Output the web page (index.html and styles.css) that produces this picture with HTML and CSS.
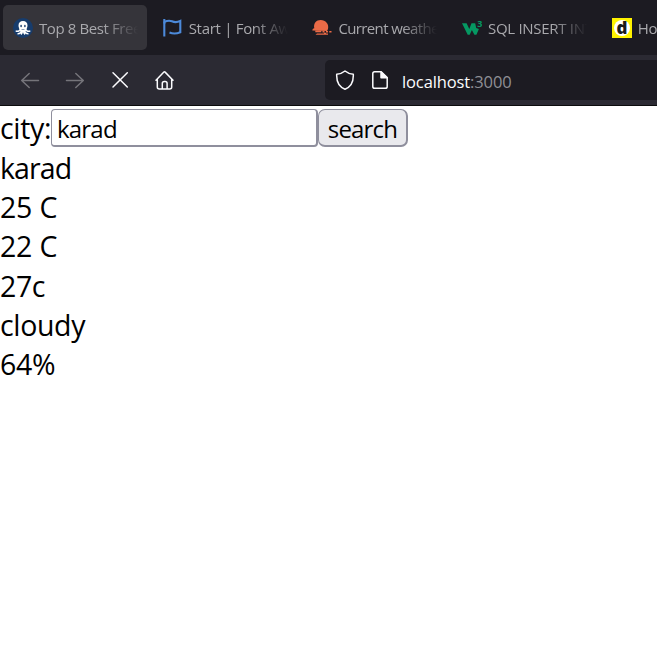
FILE: index.html
```html
<!DOCTYPE html>
<html lang="en">
<head>
<meta charset="utf-8">
<title>localhost:3000</title>
<link rel="stylesheet" href="styles.css">
</head>
<body>
<header class="browser">
  <nav class="tabs">
    <div class="tab active">
      <svg class="favicon" viewBox="0 0 20 20"><circle cx="10" cy="10" r="10" fill="#173c6c"/><path d="M5.500 7.500C5.500 4.600 7.200 3 10 3s4.500 1.600 4.500 4.500c0 1.800-.9 2.900-.9 4h-7.200c0-1.100-.9-2.200-.9-4z" fill="#fff"/><path d="M7.300 11c-.3 2.200-2 2.500-4.600 2M8.300 11.500c0 3-1.200 4.300-3.800 4.200M9.400 12c.1 2-.3 3.500-1.400 4.500M12.700 11c.3 2.200 2 2.500 4.600 2M11.700 11.500c0 3 1.200 4.300 3.800 4.200M10.600 12c-.1 2 .3 3.500 1.400 4.500" fill="none" stroke="#fff" stroke-width="1.500"/><ellipse cx="8.100" cy="8" rx=".8" ry="1.200" fill="#173c6c"/><ellipse cx="11.900" cy="8" rx=".8" ry="1.200" fill="#173c6c"/></svg>
      <span class="title t1">Top 8 Best Free</span>
    </div>
    <div class="tab">
      <svg class="favicon" viewBox="0 0 20 20" fill="none" stroke="#4c8ada" stroke-width="2.100"><path d="M1.300 1v17.500"/><path d="M1.500 3.700C4 2.700 6.500 2.200 9 3.300s5.500 1 8.300-.4v11.300c-3.500 1.500-7.500 1.700-10.800.3M1.500 5.500v-2"/></svg>
      <span class="title t2">Start | Font Awesome</span>
    </div>
    <div class="tab">
      <svg class="favicon" viewBox="0 0 20 20" fill="#eb6b47"><path d="M.3 12.500c.2-1.600 1-2.300 2-2.300C1.200 5.400 4.300 2 8.700 2c4.900 0 8.600 4.300 7.300 9l-1 2z"/><path d="M3.300 12.500h6v1.800h-6zM10.500 13.100h2v1.300h-2zM14 13.100h2v1.300h-2zM17.300 13.100H19.500v1.300h-2.200zM5 15.500h7v-.8h2v.8h2v1.300H3.500z"/></svg>
      <span class="title t3">Current weather</span>
    </div>
    <div class="tab">
      <svg class="favicon" viewBox="0 0 20 20"><path d="M0 5.200h4.600L7.300 11l2.200-5.800h3.700L14.200 10l2.700 1-2.500 5.700h-2L9.900 12l-2.200 4.700H5.700z" fill="#059862"/><text class="cube" x="15.200" y="9">3</text></svg>
      <span class="title t4">SQL INSERT INTO</span>
    </div>
    <div class="tab">
      <svg class="favicon" viewBox="0 0 20 20"><path d="M0 0h20v20H0z" fill="#fff200"/><circle cx="10" cy="10" r="8" fill="#fff"/><text class="dee" x="4.500" y="15.500">d</text></svg>
      <span class="title">How</span>
    </div>
  </nav>
  <div class="toolbar">
    <svg class="tool dim" viewBox="0 0 20 20"><path d="M18.500 10.500H1.700M9.200 3.500l-7.500 7 7.500 7"/></svg>
    <svg class="tool dim" viewBox="0 0 20 20"><path d="M1.500 10.500h16.800M10.800 3.500l7.500 7-7.500 7"/></svg>
    <svg class="tool stop" viewBox="0 0 20 20"><path d="M3 2.700L17.300 17M17.300 2.700L3 17"/></svg>
    <svg class="tool home" viewBox="0 0 20 20"><path d="M1 10.200l7.900-8.100q.6-.6 1.200 0l7.900 8.100M2.300 9v8q0 2 2 2h10.400q2 0 2-2V9M7.300 18.500v-5q0-2 2-2h.8q2 0 2 2v5"/></svg>
    <div class="urlbar">
      <svg class="tool" viewBox="0 0 20 20"><path d="M10 1q3.200 2.700 8.300 3.300C18.600 11 16.500 16.700 10 19.200 3.500 16.700 1.400 11 1.700 4.300 6.800 3.700 10 1 10 1z"/></svg>
      <svg class="tool page" viewBox="0 0 20 20"><path d="M4.700 1.700h6.500l6 5.800v8.900q0 1.900-1.900 1.900H4.700q-1.900 0-1.900-1.900V3.600q0-1.900 1.900-1.900z"/><path d="M11 2v5.700h6z" fill="#fbfbfe"/></svg>
      <span class="url">localhost<span class="port">:3000</span></span>
    </div>
  </div>
</header>
<main class="page-body">
  <form class="search">
    <label class="label" for="city">city:</label><input class="field" id="city" type="text" value="karad"><button class="button" type="button">search</button>
  </form>
  <div class="row karad">karad</div>
  <div class="row temp">25 C</div>
  <div class="row temp">22 C</div>
  <div class="row feels">27c</div>
  <div class="row sky">cloudy</div>
  <div class="row humid">64%</div>
</main>
</body>
</html>
```
FILE: styles.css
```css
* { box-sizing: border-box; }
body {
  margin: 0;
  height: 667px;
  overflow: hidden;
  background: #fff;
  color: #000;
  font-family: "Open Sans", "Noto Sans", sans-serif;
}
.browser {
  height: 106px;
  background: #2b2a33;
  border-bottom: 1px solid #0c0c0d;
}
.tabs {
  display: flex;
  gap: 5.7px;
  height: 55px;
  padding: 5px 0 0 3px;
  background: #1c1b22;
  overflow: hidden;
}
.tab {
  display: flex;
  align-items: center;
  flex: none;
  gap: 6px;
  width: 144px;
  height: 45px;
  padding: 0 9px 0 10px;
  border-radius: 5px;
}
.active { background: #35343a; }
.favicon { flex: none; width: 20px; height: 20px; }
.title {
  flex: 1;
  overflow: hidden;
  white-space: nowrap;
  color: #a9a9ad;
  font-size: 15px;
  line-height: 22px;
  letter-spacing: -0.3px;
  -webkit-mask-image: linear-gradient(to right, #000 65%, transparent 100%);
  mask-image: linear-gradient(to right, #000 65%, transparent 100%);
}
.t1 { letter-spacing: -0.4px; }
.t3 { letter-spacing: -0.62px; }
.cube { font: bold 9px "Open Sans", sans-serif; fill: #059862; }
.dee { font: 800 17px "Open Sans", sans-serif; fill: #1a1a1a; }
.toolbar {
  display: flex;
  align-items: center;
  gap: 25px;
  height: 50px;
  padding-left: 20px;
}
.tool {
  flex: none;
  width: 20px;
  height: 20px;
  fill: none;
  stroke: #fbfbfe;
  stroke-width: 1.5;
  stroke-linecap: round;
  stroke-linejoin: round;
}
.dim { stroke: #75747a; }
.urlbar {
  display: flex;
  align-items: center;
  flex: 1;
  height: 40px;
  margin-left: 125px;
  padding-left: 10px;
  border-radius: 5px 0 0 5px;
  background: #1c1b22;
}
.page { margin-left: 15px; }
.url {
  margin: 3px 0 0 12px;
  color: #fbfbfe;
  font-size: 16.5px;
  line-height: 24px;
  letter-spacing: -0.12px;
}
.port { color: #8f8f95; }
.search { display: flex; height: 43px; padding-top: 3px; }
.label {
  width: 51px;
  font-size: 28.5px;
  line-height: 38px;
  letter-spacing: -0.3px;
  white-space: nowrap;
}
.field {
  width: 267px;
  height: 38px;
  padding: 1px 5px 0;
  border: solid #8f8f9d;
  border-width: 1px 2px 2px 1px;
  border-radius: 4px;
  outline: 0;
  background: #fff;
  color: #000;
  font: 24px/32px "Open Sans", "Noto Sans", sans-serif;
  letter-spacing: -0.8px;
}
.button {
  width: 90px;
  height: 38px;
  padding: 3px 0 0;
  border: solid #8f8f9d;
  border-width: 1px 2px 2px 1px;
  border-radius: 7px;
  background: #e9e9ed;
  color: #000;
  font: 24px/32px "Open Sans", "Noto Sans", sans-serif;
  letter-spacing: -0.8px;
}
.row {
  height: 39.2px;
  font-size: 28.5px;
  line-height: 39.2px;
  white-space: nowrap;
}
.karad { letter-spacing: -0.9px; }
.temp { letter-spacing: -0.2px; }
.feels { letter-spacing: -0.4px; }
.sky { letter-spacing: -0.35px; }
.humid { letter-spacing: -0.3px; }
```
